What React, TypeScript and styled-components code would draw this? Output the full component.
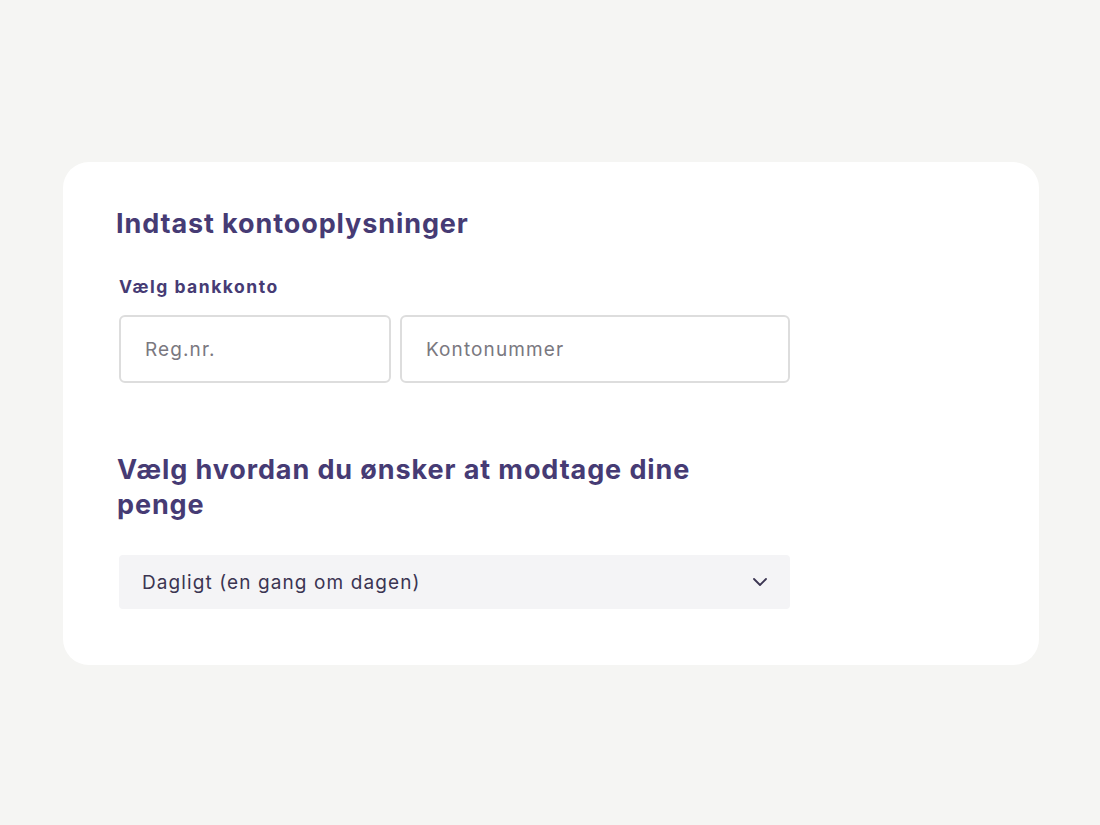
import React from 'react';
import styled, { createGlobalStyle } from 'styled-components';

const GlobalStyle = createGlobalStyle`
  html, body {
    margin: 0;
    padding: 0;
    background: #f5f5f3;
    font-family: Inter, "Noto Sans", sans-serif;
  }
`;

const Page = styled.div`
  min-height: 825px;
  padding-top: 162px;
  box-sizing: border-box;
  display: flex;
  justify-content: center;
`;

const Card = styled.section`
  width: 976px;
  height: 503px;
  box-sizing: border-box;
  margin-left: 2px;
  background: #ffffff;
  border-radius: 26px;
  padding: 44px 53px 0 53px;
`;

const Form = styled.div`
  width: 674px;
  display: flex;
  flex-direction: column;
`;

const Title = styled.h2`
  margin: 0;
  font-size: 27px;
  line-height: 36px;
  font-weight: 700;
  color: #463b74;
  letter-spacing: 0.9px;
`;

const Label = styled.label`
  margin: 34px 0 0 3px;
  font-size: 17.5px;
  line-height: 22px;
  font-weight: 700;
  color: #463b74;
  letter-spacing: 1.5px;
`;

const InputRow = styled.div`
  display: flex;
  gap: 9px;
  margin: 17px 0 0 3px;
`;

const Input = styled.input<{ $width: number }>`
  width: ${(p) => p.$width}px;
  height: 68px;
  box-sizing: border-box;
  border: 2px solid #dddddd;
  border-radius: 6px;
  padding: 0 24px;
  font-family: inherit;
  font-size: 19px;
  letter-spacing: 1.1px;
  color: #333;
  background: #fff;
  outline: none;
  &::placeholder {
    color: #7a7880;
  }
`;

const SubTitle = styled(Title)`
  margin: 69px 0 0 1px;
  line-height: 35px;
`;

const Select = styled.button`
  margin: 33px 0 0 3px;
  width: 671px;
  height: 54px;
  box-sizing: border-box;
  border: none;
  border-radius: 4px;
  background: #f4f4f6;
  padding: 0 22px 0 23px;
  display: flex;
  align-items: center;
  justify-content: space-between;
  font-family: inherit;
  font-size: 19px;
  letter-spacing: 1.1px;
  color: #3b3552;
  cursor: pointer;
`;

const Chevron = () => (
  <svg width="16" height="10" viewBox="0 0 16 10" fill="none">
    <path d="M2 2l6 6 6-6" stroke="#3b3552" strokeWidth="1.8" strokeLinecap="round" strokeLinejoin="round" />
  </svg>
);

export default function App() {
  return (
    <>
      <GlobalStyle />
      <Page>
        <Card>
          <Form>
            <Title>Indtast kontooplysninger</Title>
            <Label>Vælg bankkonto</Label>
            <InputRow>
              <Input $width={272} placeholder="Reg.nr." />
              <Input $width={390} placeholder="Kontonummer" />
            </InputRow>
            <SubTitle>
              Vælg hvordan du ønsker at modtage dine
              <br />
              penge
            </SubTitle>
            <Select>
              <span>Dagligt (en gang om dagen)</span>
              <Chevron />
            </Select>
          </Form>
        </Card>
      </Page>
    </>
  );
}
